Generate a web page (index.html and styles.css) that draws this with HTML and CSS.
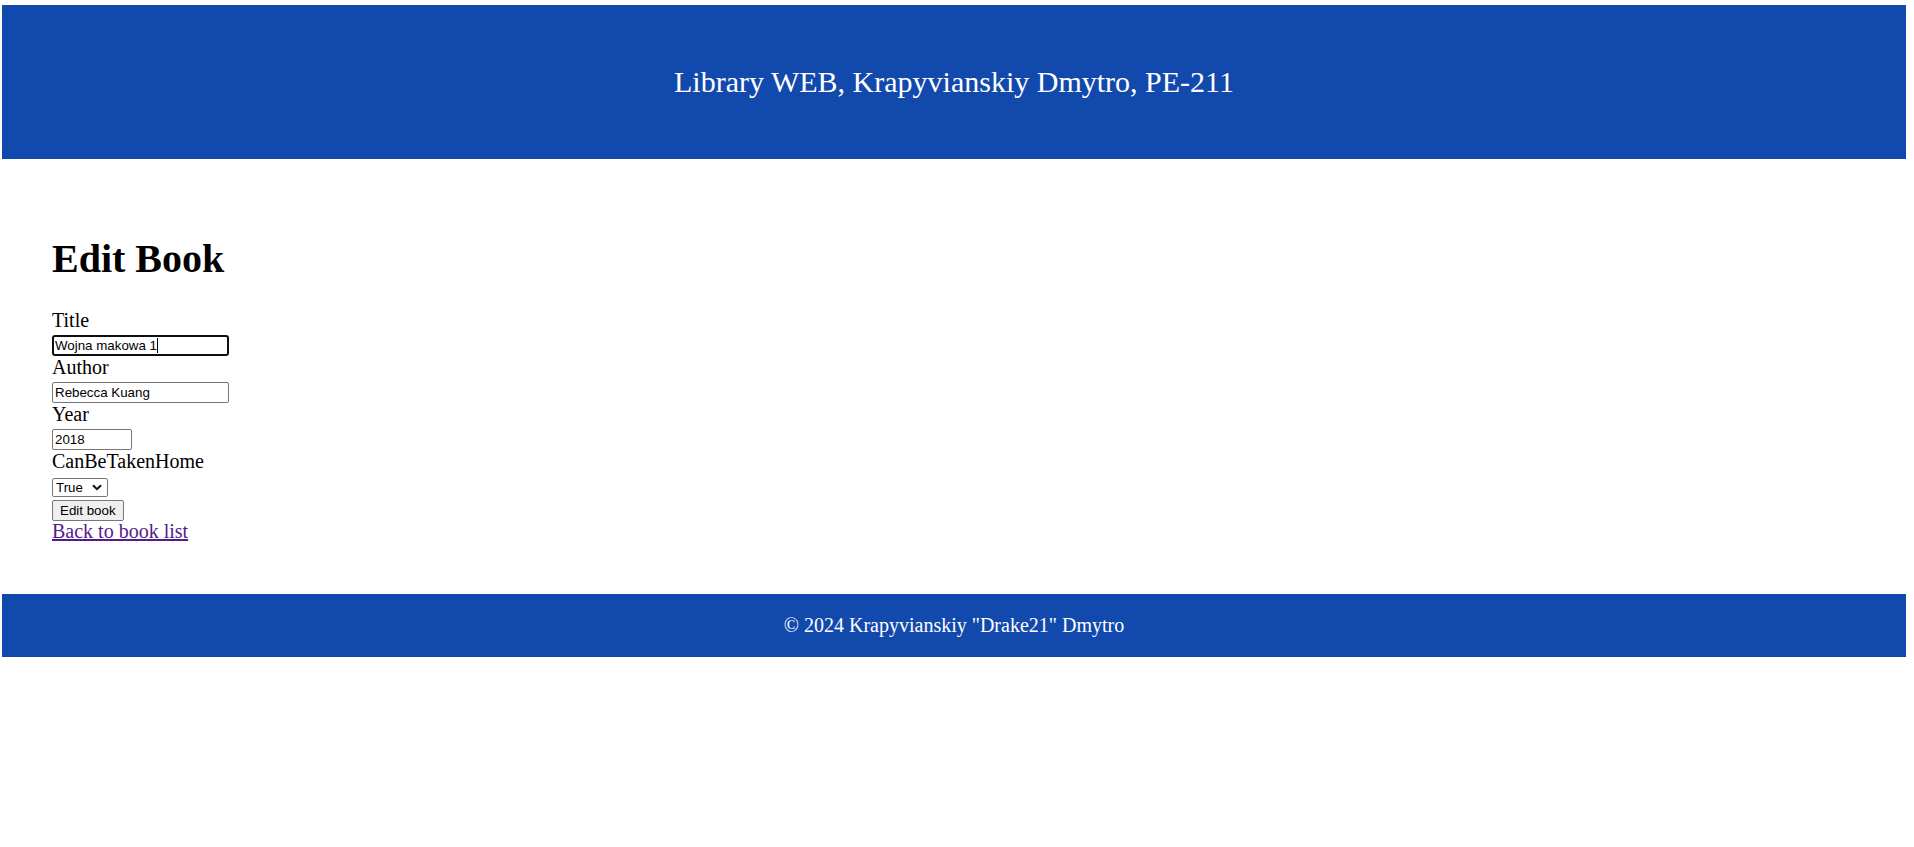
FILE: index.html
```html
<!DOCTYPE html>
<html lang="en">
<head>
<meta charset="utf-8">
<title>Edit Book - Library WEB</title>
<link rel="stylesheet" href="styles.css">
</head>
<body>
<header class="site-header">
  <div class="site-title">Library WEB, Krapyvianskiy Dmytro, PE-211</div>
</header>
<main class="content">
  <h1 class="page-title">Edit Book</h1>
  <form class="book-form">
    <div class="field">
      <label class="field-label" for="title">Title</label>
      <div class="input-wrap">
        <input class="text-input wide focused" id="title" type="text" value="Wojna makowa 1"><span class="caret"></span>
      </div>
    </div>
    <div class="field">
      <label class="field-label" for="author">Author</label>
      <input class="text-input wide" id="author" type="text" value="Rebecca Kuang">
    </div>
    <div class="field">
      <label class="field-label" for="year">Year</label>
      <input class="text-input narrow" id="year" type="text" value="2018">
    </div>
    <div class="field">
      <label class="field-label" for="home">CanBeTakenHome</label>
      <div class="select-wrap">
        <select class="select" id="home">
          <option selected>True</option>
          <option>False</option>
        </select>
        <svg class="chevron" width="10" height="7" viewBox="0 0 10 7"><path d="M1 1.2 L5 5.2 L9 1.2" fill="none" stroke="#111" stroke-width="2"/></svg>
      </div>
    </div>
    <button class="btn" type="button">Edit book</button>
  </form>
  <div class="back-row"><a class="back-link" href="#">Back to book list</a></div>
</main>
<footer class="site-footer">
  <div class="footer-text">© 2024 Krapyvianskiy "Drake21" Dmytro</div>
</footer>
</body>
</html>
```
FILE: styles.css
```css
html, body {
  background: #ffffff;
}
body {
  margin: 5px 8px 0 2px;
  font-family: "Liberation Serif", "Times New Roman", serif;
  font-size: 20px;
  color: #000;
}
.site-header {
  height: 154px;
  background: #1249ad;
  display: flex;
  align-items: center;
  justify-content: center;
}
.site-title {
  color: #ffffff;
  font-size: 30px;
  line-height: 34px;
}
.content {
  padding: 51px 50px 51px 50px;
}
.page-title {
  font-size: 40px;
  font-weight: bold;
  line-height: 46px;
  margin: 26px 0 27px 0;
}
.book-form {
  display: flex;
  flex-direction: column;
  align-items: flex-start;
}
.field {
  display: flex;
  flex-direction: column;
  align-items: flex-start;
}
.field-label {
  display: block;
  line-height: 23px;
  height: 23px;
}
.input-wrap {
  position: relative;
}
.text-input {
  display: block;
  box-sizing: border-box;
  height: 21px;
  margin: 3px 0 0 0;
  padding: 1px 2px;
  border: 1px solid #767676;
  border-radius: 2px;
  font-family: Arial, "Liberation Sans", sans-serif;
  font-size: 13.33px;
  color: #000;
  background: #fff;
}
.text-input.wide {
  width: 177px;
}
.text-input.narrow {
  width: 80px;
}
.text-input.focused {
  border: 2px solid #101010;
  border-radius: 3px;
  padding: 0 1px;
  outline: none;
}
.caret {
  position: absolute;
  left: 105px;
  top: 6px;
  width: 1px;
  height: 15px;
  background: #000;
}
.select-wrap {
  position: relative;
  margin-top: 5px;
}
.select {
  display: block;
  box-sizing: border-box;
  width: 56px;
  height: 19px;
  padding: 0 0 0 3px;
  border: 1px solid #767676;
  border-radius: 2px;
  background: #fff;
  font-family: Arial, "Liberation Sans", sans-serif;
  font-size: 13.33px;
  color: #000;
  -webkit-appearance: none;
  appearance: none;
}
.chevron {
  position: absolute;
  right: 6px;
  top: 6px;
  pointer-events: none;
}
.btn {
  display: block;
  box-sizing: border-box;
  height: 21px;
  margin-top: 3px;
  padding: 1px 7px;
  border: 1px solid #767676;
  border-radius: 2px;
  background: #efefef;
  font-family: Arial, "Liberation Sans", sans-serif;
  font-size: 13.33px;
  color: #000;
}
.back-row {
  margin-top: -1px;
  height: 23px;
  line-height: 23px;
}
.back-link {
  color: #551a8b;
  text-decoration: underline;
}
.site-footer {
  height: 63px;
  background: #1249ad;
  display: flex;
  align-items: center;
  justify-content: center;
}
.footer-text {
  color: #ffffff;
  font-size: 20px;
  line-height: 23px;
}
```
